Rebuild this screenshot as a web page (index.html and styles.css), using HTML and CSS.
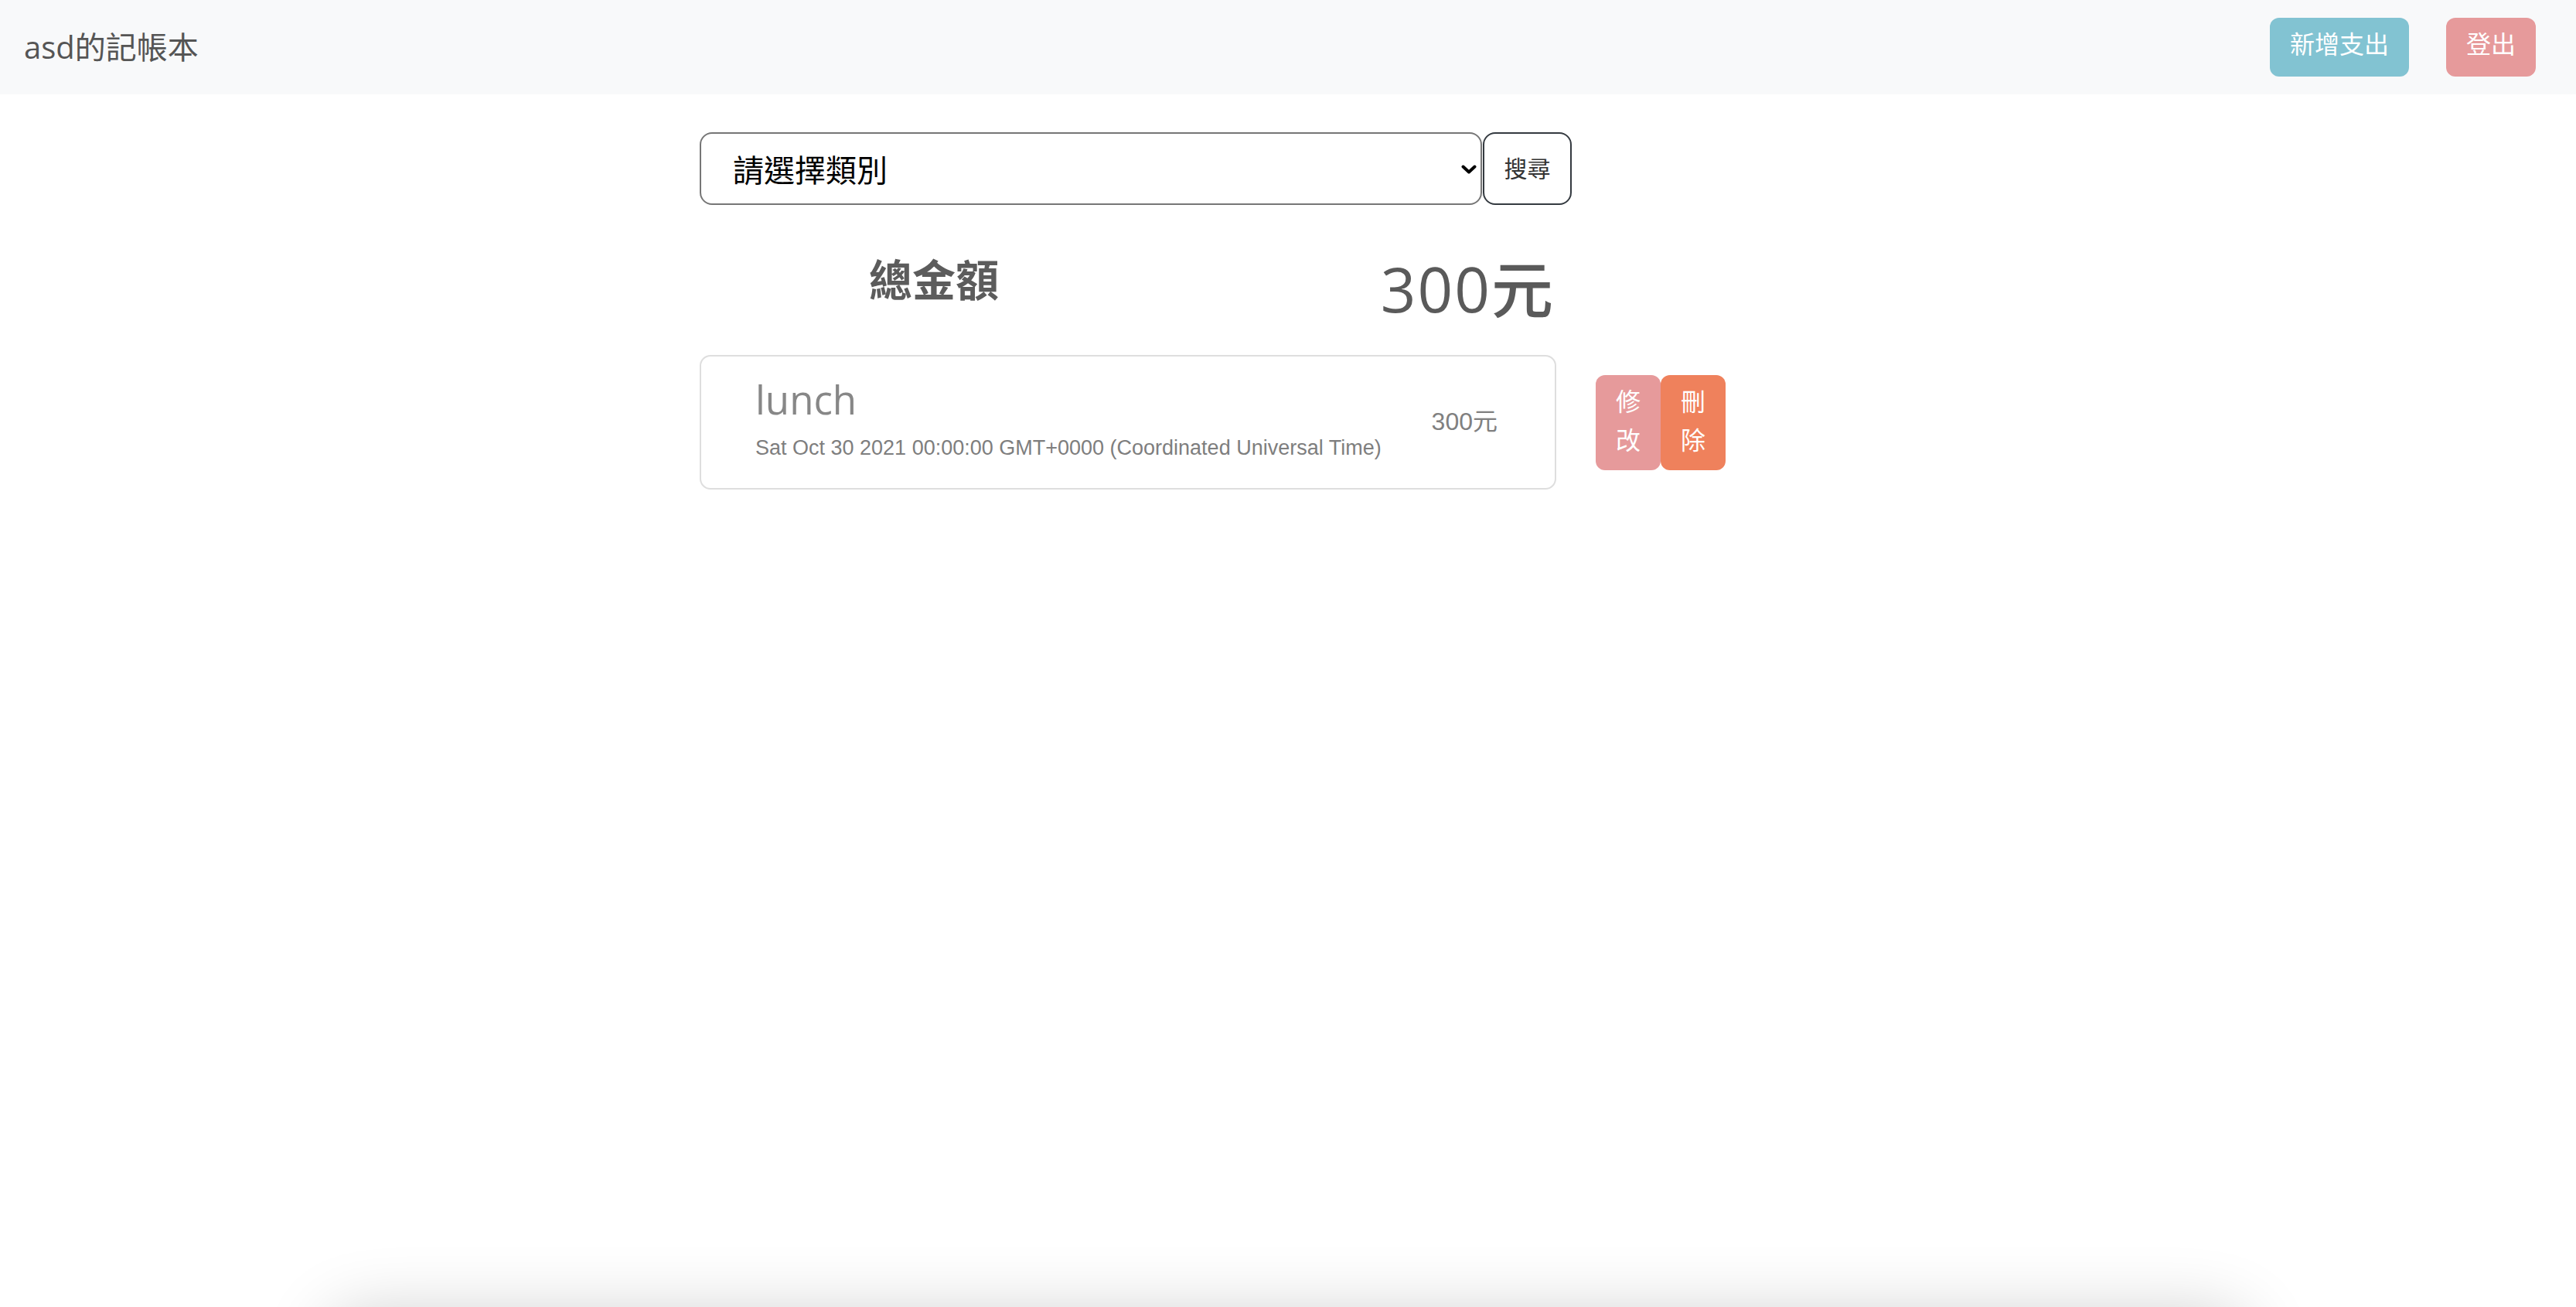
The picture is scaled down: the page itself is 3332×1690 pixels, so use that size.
FILE: index.html
```html
<!DOCTYPE html>
<html lang="zh-Hant">
<head>
<meta charset="utf-8">
<title>asd的記帳本</title>
<link rel="stylesheet" href="styles.css">
</head>
<body>
<div class="page">
  <nav class="navbar">
    <span class="brand">asd的記帳本</span>
    <div class="nav-actions">
      <button class="nav-btn btn-add" type="button">新增支出</button>
      <button class="nav-btn btn-logout" type="button">登出</button>
    </div>
  </nav>

  <main class="main">
    <form class="search-row">
      <div class="select-wrap">
        <select class="category">
          <option>請選擇類別</option>
        </select>
        <svg class="chevron" viewBox="0 0 20 12" width="20" height="12" aria-hidden="true">
          <polyline points="2.5,2.5 10,9.5 17.5,2.5" fill="none" stroke="#000" stroke-width="4" stroke-linecap="round" stroke-linejoin="round"/>
        </svg>
      </div>
      <button class="search-btn" type="button">搜尋</button>
    </form>

    <div class="summary">
      <h3 class="total-label">總金額</h3>
      <div class="total-amount">300元</div>
    </div>

    <div class="record-row">
      <div class="record-card">
        <div class="record-info">
          <div class="record-name">lunch</div>
          <div class="record-date">Sat Oct 30 2021 00:00:00 GMT+0000 (Coordinated Universal Time)</div>
        </div>
        <div class="record-amount">300元</div>
      </div>
      <div class="record-actions">
        <button class="act-btn btn-edit" type="button">修<br>改</button>
        <button class="act-btn btn-del" type="button">刪<br>除</button>
      </div>
    </div>
  </main>

  <div class="bottom-sheet"></div>
</div>
</body>
</html>
```

FILE: styles.css
```css
* {
  box-sizing: border-box;
}

html, body {
  margin: 0;
  padding: 0;
  background: #ffffff;
  overflow: hidden;
}

body {
  font-family: "Open Sans", "Noto Sans CJK TC", sans-serif;
  color: #212529;
}

.page {
  display: flex;
  flex-direction: column;
  min-height: 2000px;
}

/* ---------- navbar ---------- */
.navbar {
  height: 122px;
  flex: none;
  background: #f8f9fa;
  display: flex;
  align-items: center;
  justify-content: space-between;
  padding: 0 52px 0 31px;
}

.brand {
  font-family: "Open Sans", "Noto Sans CJK TC", sans-serif;
  font-size: 40px;
  color: #555555;
  line-height: 1;
}

.nav-actions {
  display: flex;
  align-items: center;
  gap: 48px;
}

.nav-btn {
  border: none;
  border-radius: 12px;
  color: #ffffff;
  font-family: "Noto Sans CJK TC", sans-serif;
  font-size: 32px;
  line-height: 48px;
  padding: 8px 26px 20px;
  height: 76px;
  cursor: pointer;
}

.btn-add {
  background: #82c3d2;
}

.btn-logout {
  background: #e69a9b;
}

/* ---------- main ---------- */
.main {
  flex: 1;
  margin-left: 905px;
  padding-top: 49px;
}

.search-row {
  display: flex;
  margin: 0;
}

.select-wrap {
  position: relative;
  width: 1012px;
  height: 94px;
}

.category {
  appearance: none;
  -webkit-appearance: none;
  width: 100%;
  height: 100%;
  border: 2px solid #767676;
  border-radius: 16px;
  background: #ffffff;
  color: #000000;
  font-family: "Noto Sans CJK TC", sans-serif;
  font-size: 40px;
  padding: 0 60px 0 41px;
  outline: none;
}

.chevron {
  position: absolute;
  right: 7px;
  top: 42px;
  pointer-events: none;
}

.search-btn {
  width: 115px;
  height: 94px;
  margin-left: 1px;
  border: 2px solid #343a40;
  border-radius: 16px;
  background: #ffffff;
  color: #333333;
  font-family: "Noto Sans CJK TC", sans-serif;
  font-size: 30px;
  padding: 0 0 4px;
  cursor: pointer;
}

/* ---------- summary ---------- */
.summary {
  display: flex;
  align-items: flex-start;
  width: 1108px;
  margin-top: 60px;
}

.total-label {
  width: 606px;
  margin: 0;
  text-align: center;
  font-family: "Noto Sans CJK TC", sans-serif;
  font-size: 56px;
  font-weight: 700;
  line-height: 1.2;
  color: #5c5c5c;
}

.total-amount {
  flex: 1;
  text-align: right;
  font-family: "Open Sans", "Noto Sans CJK TC", sans-serif;
  font-size: 80px;
  font-weight: 500;
  letter-spacing: 2px;
  line-height: 1.2;
  color: #5a5a5a;
  padding-right: 2px;
}

/* ---------- record ---------- */
.record-row {
  display: flex;
  align-items: center;
  gap: 51px;
  margin-top: 38px;
}

.record-card {
  width: 1108px;
  border: 2px solid #dedede;
  border-radius: 14px;
  display: flex;
  align-items: center;
  justify-content: space-between;
  padding: 25px 74px 32px 70px;
}

.record-name {
  font-family: "Open Sans", sans-serif;
  font-size: 51px;
  line-height: 60px;
  color: #878787;
}

.record-date {
  margin-top: 13px;
  font-family: "Liberation Sans", Arial, sans-serif;
  font-size: 27px;
  line-height: 40px;
  color: #7e7e7e;
}

.record-amount {
  font-family: "Liberation Sans", "Noto Sans CJK TC", sans-serif;
  font-size: 32px;
  line-height: 40px;
  color: #808080;
  padding-top: 4px;
}

.record-actions {
  display: flex;
}

.act-btn {
  width: 84px;
  border: none;
  border-radius: 12px;
  color: #ffffff;
  font-family: "Noto Sans CJK TC", sans-serif;
  font-size: 32px;
  line-height: 50px;
  padding: 7px 0 16px;
  cursor: pointer;
}

.btn-edit {
  background: #e69a9b;
}

.btn-del {
  background: #ef815c;
}

/* ---------- off-screen sheet whose shadow peeks in ---------- */
.bottom-sheet {
  flex: none;
  width: 2480px;
  height: 300px;
  margin: 0 auto;
  border-radius: 40px;
  background: #ffffff;
  box-shadow: 0 0 90px rgba(0, 0, 0, 0.2);
}
```
